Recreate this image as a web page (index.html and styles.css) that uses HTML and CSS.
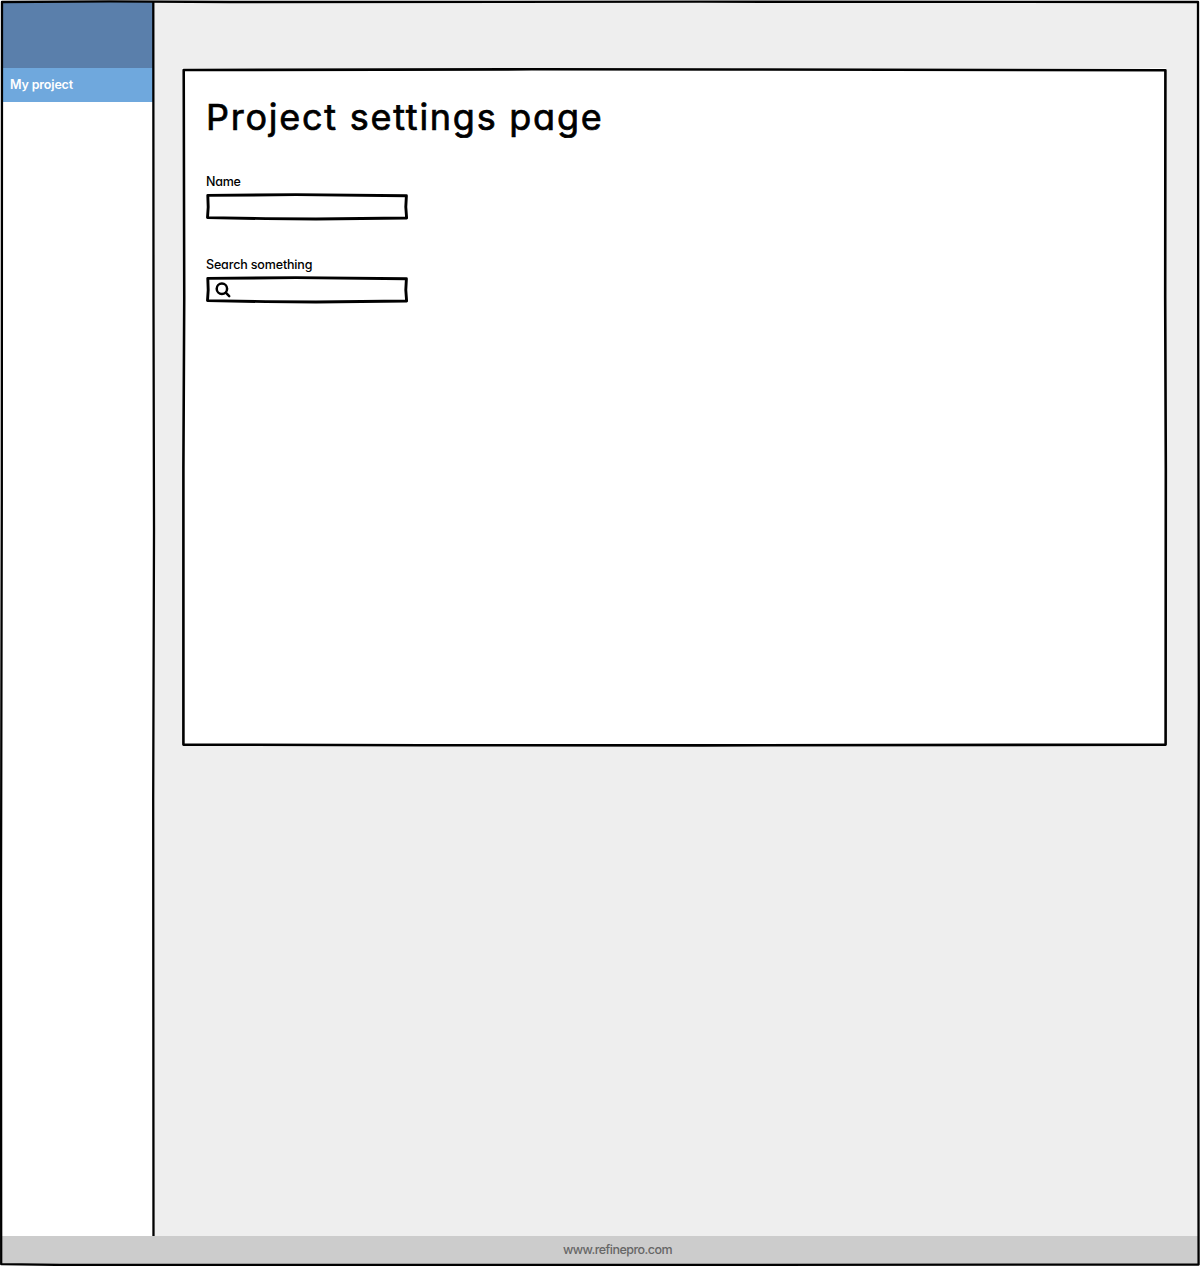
FILE: index.html
```html
<!DOCTYPE html>
<html lang="en">
<head>
<meta charset="utf-8">
<title>Project settings page</title>
<link rel="stylesheet" href="styles.css">
</head>
<body>
<div class="window">
  <div class="body">
    <nav class="sidebar">
      <div class="brand"></div>
      <a class="nav-item"><span class="nav-text">My project</span></a>
    </nav>
    <main class="content">
      <section class="card">
        <svg class="sketch" viewBox="0 0 984 678" aria-hidden="true">
          <path d="M1.7 2L350 1.3L550 1.5L983.4 2.2L983.2 230L983.8 400L983.6 676.6L520 677.4L240 677.2L1.4 676.6L1.4 400L2.2 230Z"/>
        </svg>
        <h1 class="title">Project settings page</h1>
        <div class="field">
          <label class="label" for="name">Name</label>
          <div class="box">
            <svg class="sketch sketch-box" viewBox="0 0 202 27" aria-hidden="true"><path d="M1.8 2.4L90 1.6L200.4 2.7L199.8 14L200.6 25L110 26L60 25.6L1.5 24.6L2.2 14Z"/></svg>
            <input class="input" id="name" type="text">
          </div>
        </div>
        <div class="field">
          <label class="label label-search" for="search">Search something</label>
          <div class="box">
            <svg class="sketch sketch-box" viewBox="0 0 202 27" aria-hidden="true"><path d="M1.8 2.4L90 1.6L200.4 2.7L199.8 14L200.6 25L110 26L60 25.6L1.5 24.6L2.2 14Z"/></svg>
            <svg class="icon" viewBox="0 0 16 16" aria-hidden="true"><circle cx="6.9" cy="6.7" r="5.2"/><path d="M10.8 10.7L14.2 14.1"/></svg>
            <input class="input" id="search" type="text">
          </div>
        </div>
      </section>
    </main>
  </div>
  <footer class="footer"><span class="site">www.refinepro.com</span></footer>
  <svg class="sketch frame" viewBox="0 0 1200 1266" aria-hidden="true">
    <path d="M2 2L110 1.4L230 2L700 1.7L1198 2L1198.2 330L1198.8 700L1198.2 1000L1198.6 1264.6L600 1264.9L60 1264.9L1.2 1264.2L1 900L1.8 500Z"/>
    <path d="M153.3 2L153.5 300L154 530L153.2 800L153.5 1236"/>
  </svg>
</div>
</body>
</html>
```

FILE: styles.css
```css
* {
  box-sizing: border-box;
}

body {
  margin: 0;
  font-family: Inter, "Open Sans", sans-serif;
  font-feature-settings: "cv11" 1, "calt" 0;
  color: #000;
}

.window {
  position: relative;
  display: flex;
  flex-direction: column;
  width: 1200px;
  height: 1266px;
  padding: 2px 2px 1px;
  background: #fff;
}

.body {
  display: grid;
  grid-template-columns: 151px 1fr;
  flex: 1;
}

.sidebar {
  background: #fff;
}

.brand {
  height: 66px;
  background: #5a7fab;
}

.nav-item {
  display: flex;
  align-items: center;
  height: 34px;
  padding-left: 8px;
  background: #6fa8dd;
  color: #fff;
  font-size: 12.5px;
  font-weight: 600;
  line-height: 16px;
}

.nav-text {
  letter-spacing: -0.16px;
}

.content {
  padding: 66px 32px 0 29px;
  background: #eee;
}

.card {
  position: relative;
  height: 678px;
  padding: 25px 24px;
  background: #fff;
}

.sketch {
  position: absolute;
  inset: 0;
  width: 100%;
  height: 100%;
  overflow: visible;
  fill: none;
  stroke: #000;
  stroke-width: 2.6;
  stroke-linejoin: round;
  pointer-events: none;
}

.sketch-box {
  stroke-width: 2.9;
}

.title {
  margin: 0 0 33px;
  font-size: 36px;
  font-weight: 400;
  line-height: 48px;
  letter-spacing: 1.75px;
  white-space: nowrap;
  -webkit-text-stroke: 0.7px #000;
}

.field {
  height: 83px;
}

.label {
  display: block;
  height: 19px;
  font-size: 12.5px;
  font-weight: 450;
  line-height: 16px;
  letter-spacing: -0.25px;
}

.label-search {
  letter-spacing: -0.15px;
}

.box {
  position: relative;
  display: flex;
  align-items: center;
  width: 202px;
  height: 27px;
  padding-left: 9px;
}

.icon {
  flex: none;
  width: 16px;
  height: 16px;
  fill: none;
  stroke: #000;
  stroke-width: 2.5;
  stroke-linecap: round;
}

.input {
  flex: 1;
  min-width: 0;
  height: 20px;
  margin: 0 6px;
  border: 0;
  outline: 0;
  background: transparent;
  font: inherit;
}

.footer {
  display: flex;
  justify-content: center;
  height: 29px;
  padding: 6px 0 0 35px;
  background: #ccc;
  color: #666;
  font-size: 12.5px;
  font-weight: 500;
  line-height: 16px;
}

.site {
  letter-spacing: -0.53px;
}

.frame {
  stroke-width: 2.3;
}
```
